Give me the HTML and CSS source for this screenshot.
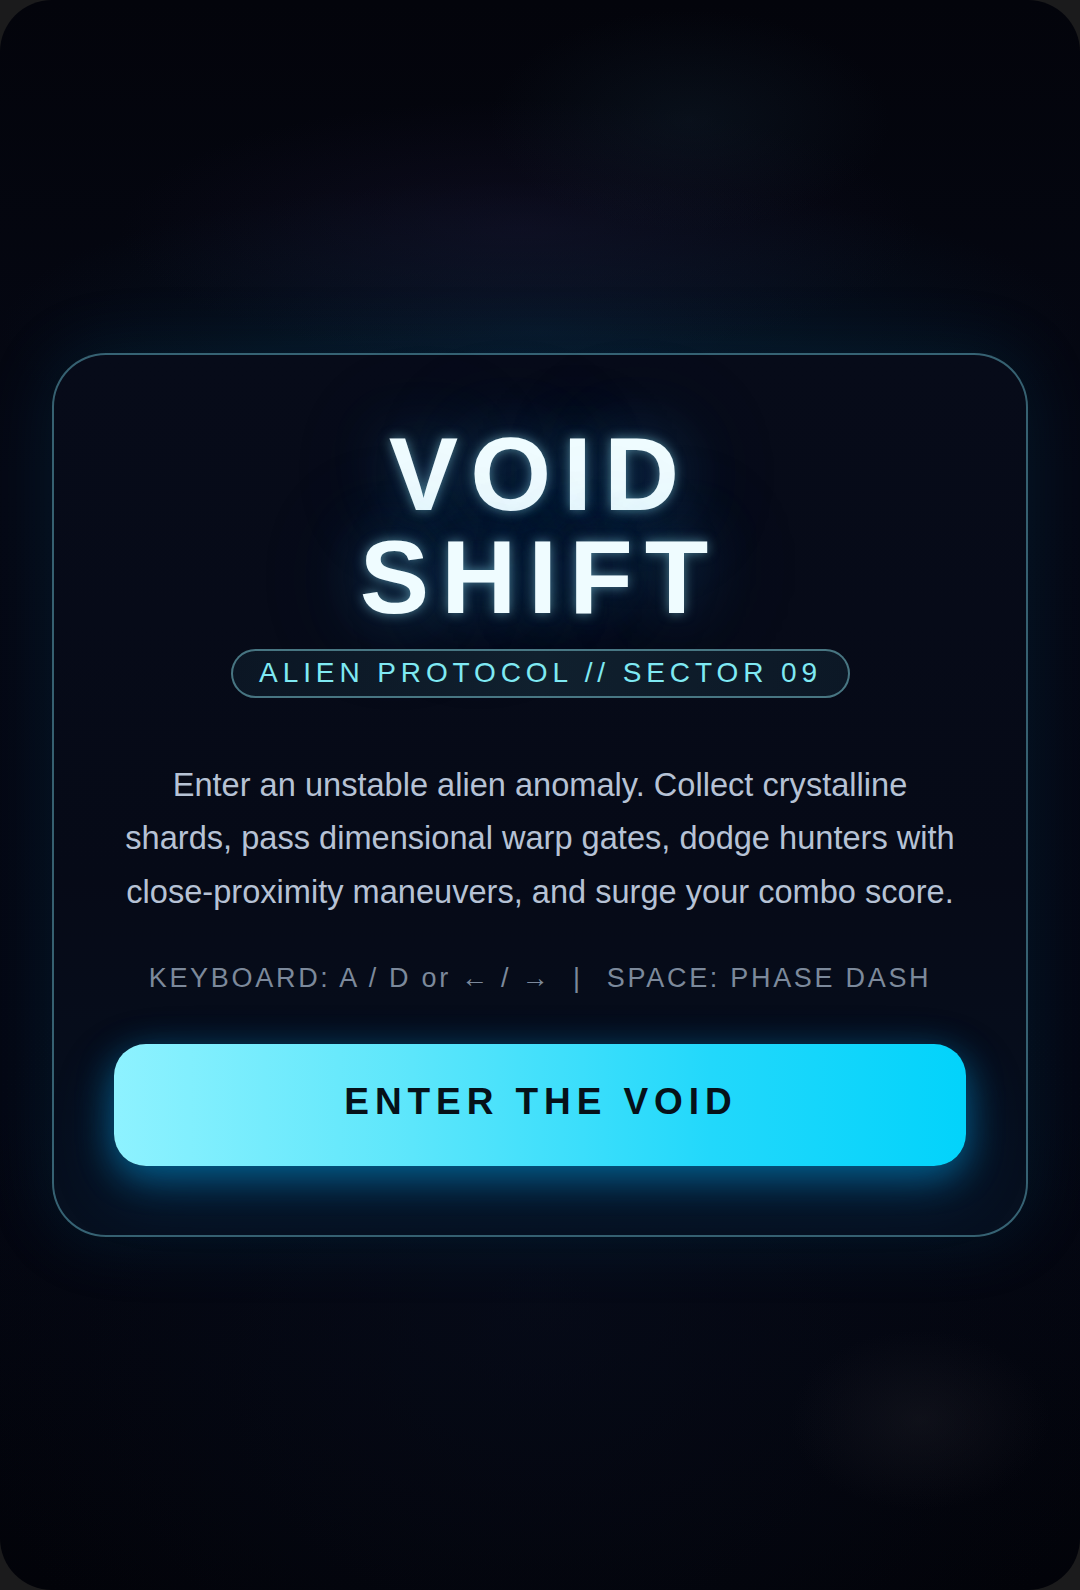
FILE: index.html
```html
<!DOCTYPE html>
<html lang="en">
<head>
<meta charset="utf-8">
<title>Void Shift</title>
<link rel="stylesheet" href="styles.css">
</head>
<body>
<div class="screen">
  <main class="card">
    <h1 class="title"><span class="title-line">VOID</span><span class="title-line">SHIFT</span></h1>
    <div class="badge">ALIEN PROTOCOL // SECTOR 09</div>
    <p class="lead">Enter an unstable alien anomaly. Collect crystalline shards, pass dimensional warp gates, dodge hunters with close-proximity maneuvers, and surge your combo score.</p>
    <p class="controls">KEYBOARD: A / D or <span class="arrow">←</span> / <span class="arrow">→</span><span class="sep">|</span>SPACE: PHASE DASH</p>
    <button class="cta" type="button">ENTER THE VOID</button>
  </main>
</div>
</body>
</html>
```
FILE: styles.css
```css
html, body {
  margin: 0;
  padding: 0;
}
body {
  background: #1b1b1c;
  width: 1080px;
  height: 1590px;
  overflow: hidden;
  font-family: "Liberation Sans", Arial, sans-serif;
}
.screen {
  box-sizing: border-box;
  width: 1080px;
  height: 1590px;
  border-radius: 52px;
  overflow: hidden;
  padding: 0 52px;
  display: flex;
  align-items: center;
  justify-content: center;
  background:
    radial-gradient(ellipse 200px 110px at 690px 120px, rgba(22, 44, 60, 0.28), transparent 100%),
    radial-gradient(ellipse 400px 130px at 520px 230px, rgba(26, 22, 52, 0.4), transparent 100%),
    radial-gradient(ellipse 540px 150px at 540px 330px, rgba(10, 42, 66, 0.42), transparent 100%),
    radial-gradient(ellipse 130px 90px at 920px 1420px, rgba(40, 40, 48, 0.3), transparent 100%),
    radial-gradient(ellipse 600px 500px at 540px 1300px, rgba(8, 14, 30, 0.55), transparent 100%),
    linear-gradient(180deg, #03040b 0%, #050814 30%, #040713 70%, #020309 100%);
}
.card {
  box-sizing: border-box;
  width: 976px;
  padding: 68px 60px 69px;
  border: 2px solid rgba(84, 150, 168, 0.62);
  border-radius: 54px;
  background: linear-gradient(180deg, #070b19 0%, #060a17 60%, #061020 100%);
  box-shadow: 0 0 70px rgba(0, 120, 170, 0.16);
  display: flex;
  flex-direction: column;
  align-items: center;
  text-align: center;
}
.title {
  margin: 0;
  font-size: 104px;
  font-weight: 700;
  letter-spacing: 12px;
  color: #effcff;
  text-shadow:
    0 0 12px rgba(150, 235, 255, 0.5),
    0 0 60px rgba(60, 160, 230, 0.4),
    0 0 120px rgba(30, 110, 180, 0.3);
}
.title-line {
  display: block;
  height: 103px;
  line-height: 103px;
}
.badge {
  margin-top: 20px;
  box-sizing: border-box;
  width: 619px;
  padding: 5px 0 7px 1px;
  border: 2px solid rgba(92, 150, 162, 0.75);
  border-radius: 30px;
  background: linear-gradient(90deg, #0b1624 0%, #10202e 50%, #0c1826 100%);
  color: #7fe9f3;
  font-size: 28px;
  line-height: 33px;
  letter-spacing: 0.175em;
  white-space: nowrap;
}
.lead {
  margin: 60px 0 0;
  max-width: 840px;
  font-size: 32.6px;
  line-height: 53.5px;
  color: #b6c2d5;
}
.controls {
  margin: 42px 0 0;
  font-size: 27px;
  line-height: 36px;
  letter-spacing: 0.1em;
  color: #7c899b;
  white-space: nowrap;
}
.sep {
  margin: 0 24px 0 22px;
}
.cta {
  margin-top: 48px;
  width: 852px;
  height: 122px;
  border: none;
  border-radius: 32px;
  background: linear-gradient(90deg, #8ef2ff 0%, #5ce6fb 35%, #22d8fb 70%, #02d3fb 100%);
  box-shadow:
    0 10px 36px rgba(0, 170, 240, 0.45),
    0 24px 60px rgba(0, 120, 200, 0.25);
  color: #061119;
  font-family: "Liberation Sans", Arial, sans-serif;
  font-size: 37px;
  font-weight: 700;
  letter-spacing: 0.16em;
  padding: 0 0 6px 2px;
  cursor: pointer;
}
```
